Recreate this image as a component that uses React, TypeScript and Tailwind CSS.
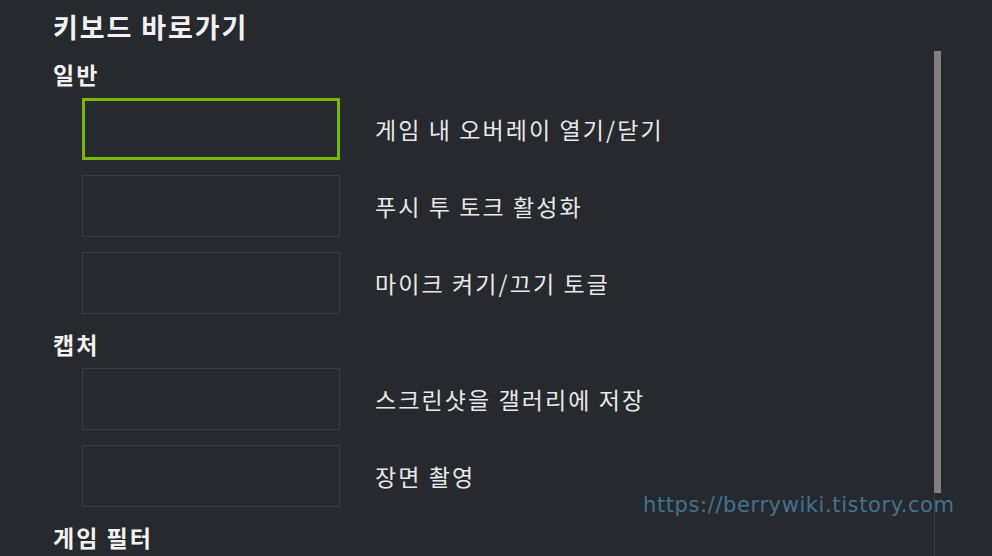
import React from "react";

interface Shortcut {
  label: string;
  active?: boolean;
}

interface Section {
  title: string;
  items: Shortcut[];
}

const sections: Section[] = [
  {
    title: "일반",
    items: [
      { label: "게임 내 오버레이 열기/닫기", active: true },
      { label: "푸시 투 토크 활성화" },
      { label: "마이크 켜기/끄기 토글" },
    ],
  },
  {
    title: "캡처",
    items: [{ label: "스크린샷을 갤러리에 저장" }, { label: "장면 촬영" }],
  },
  {
    title: "게임 필터",
    items: [],
  },
];

const KeyBox: React.FC<Shortcut> = ({ label, active = false }) => (
  <div className="flex items-center">
    <div
      className={
        active
          ? "ml-[29px] h-[62px] w-[258px] border-[3px] border-[#76b900]"
          : "ml-[29px] h-[62px] w-[258px] border border-[#3a3e42]"
      }
    />
    <span className="ml-[35px] text-[23px] tracking-[2.1px] text-[#e8e8e8]">{label}</span>
  </div>
);

export default function App() {
  return (
    <div
      className="relative flex h-[556px] w-[992px] overflow-hidden bg-[#262a2e]"
      style={{ fontFamily: '"Noto Sans CJK KR", "Noto Sans", sans-serif' }}
    >
      <div className="flex-1 pl-[53px]">
        <h1 className="flex h-[54px] items-center text-[27px] font-bold tracking-[1.9px] text-[#f2f2f2]">
          키보드 바로가기
        </h1>
        {sections.map((section, i) => (
          <div key={section.title} className={i > 0 ? "mt-[10px]" : ""}>
            <h2 className="flex h-[40px] items-center text-[23px] font-bold tracking-[2px] text-[#f2f2f2]">
              {section.title}
            </h2>
            {section.items.length > 0 && (
              <div className="-ml-[53px] mt-[4px] flex flex-col gap-[15px] pl-[53px]">
                {section.items.map((item) => (
                  <KeyBox key={item.label} {...item} />
                ))}
              </div>
            )}
          </div>
        ))}
      </div>

      {/* scroll track */}
      <div className="flex w-[58px] flex-col pt-[51px]">
        <div className="h-[442px] w-[7px] bg-[#7f7f7f]" />
        <div className="w-px flex-1 bg-[#3a3e42]" />
      </div>

      <div
        className="absolute left-[643px] top-[493px] text-[21px] leading-[24px] tracking-[0.6px] text-[#44728f]"
        style={{ fontFamily: '"DejaVu Sans", sans-serif' }}
      >
        https://berrywiki.tistory.com
      </div>
    </div>
  );
}
